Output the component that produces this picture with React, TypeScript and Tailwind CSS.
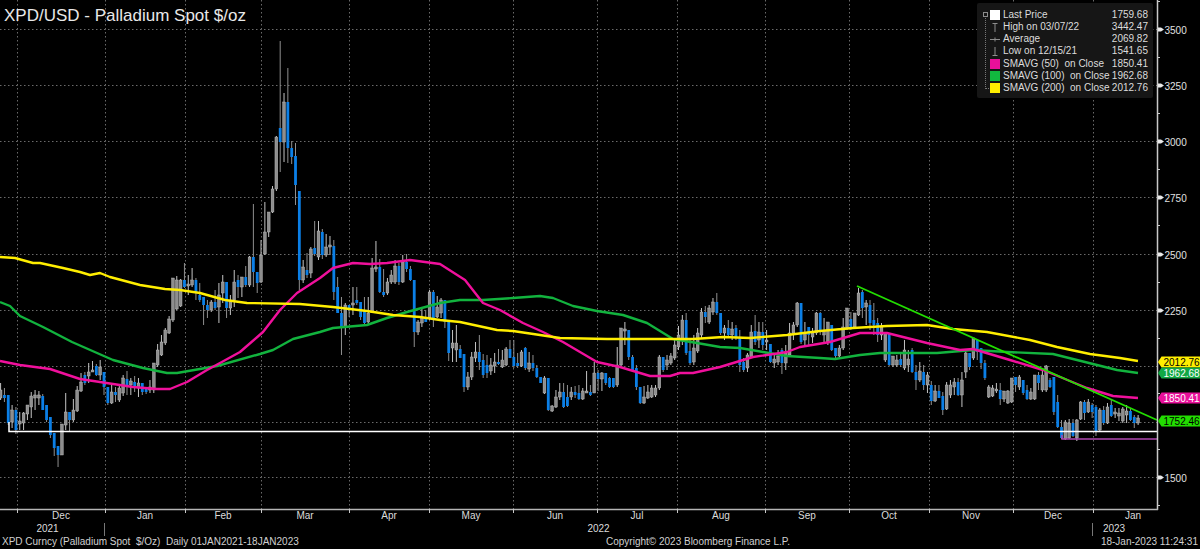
import React from "react";

// [high, bodyTop, bodyBottom, low, up] in page pixels, one row per trading day
const CANDLES: number[][] = [
  [383,390,398,400,1],[388,395,398,402,0],[395,395,423,425,0],[405,410,422,428,1],[407,410,430,434,0],[412,421,424,430,1],[412,413,423,430,1],[405,405,414,420,1],
  [392,396,407,418,1],[390,395,398,410,1],[391,395,398,405,1],[394,396,410,410,0],[405,405,420,422,0],[417,417,435,438,0],[433,433,448,456,0],[446,446,455,467,0],
  [424,424,455,455,1],[393,412,425,430,1],[412,412,420,432,0],[399,410,420,422,1],[386,390,411,412,1],[373,382,391,392,1],[372,375,383,385,0],[363,372,376,383,1],
  [361,370,372,372,1],[364,366,375,376,0],[360,367,375,380,1],[372,372,387,395,0],[387,387,403,405,0],[385,392,403,404,1],[387,392,395,402,0],[385,388,400,402,1],
  [375,378,393,396,1],[371,379,387,395,0],[378,381,385,395,1],[376,382,386,392,0],[378,383,388,397,1],[383,383,392,395,0],[388,388,392,394,0],[380,387,390,393,1],
  [363,363,390,393,1],[344,350,365,367,1],[335,342,355,356,1],[328,330,343,345,1],[316,319,333,334,1],[278,278,320,322,1],[276,280,309,310,1],[279,280,306,307,1],
  [263,280,287,288,0],[275,284,286,295,1],[268,280,285,287,1],[278,280,292,300,0],[283,295,300,302,0],[297,297,305,325,0],[300,305,310,318,0],[300,302,310,312,1],
  [290,302,308,310,0],[283,295,307,323,1],[275,282,293,303,1],[282,282,308,318,0],[295,300,308,315,1],[270,282,300,307,1],[275,280,287,298,0],[277,277,287,297,1],
  [266,277,285,287,0],[256,257,285,287,1],[204,257,272,287,0],[272,272,283,293,0],[240,255,282,283,1],[202,232,254,255,1],[212,212,232,237,1],[186,189,212,213,1],
  [136,137,189,191,1],[41,128,142,172,0],[93,102,142,162,1],[68,102,148,163,0],[141,148,157,164,0],[143,156,185,205,0],[191,191,280,290,0],[260,267,280,283,1],
  [253,270,275,278,0],[247,249,273,278,1],[221,248,254,256,0],[221,231,257,260,1],[229,232,255,259,0],[234,247,255,257,1],[236,245,247,255,1],[240,246,292,300,0],
  [277,287,313,313,0],[297,313,327,355,0],[303,305,327,335,1],[305,305,310,317,0],[287,303,305,315,1],[287,300,303,305,0],[302,302,317,320,0],[297,310,323,325,0],
  [297,313,322,325,1],[258,268,312,313,1],[241,267,269,272,1],[259,267,292,293,0],[269,292,295,297,0],[278,282,293,295,1],[270,275,282,284,1],[260,266,282,284,1],
  [263,266,282,285,0],[255,262,282,283,1],[254,262,269,272,0],[266,269,280,281,0],[280,280,332,347,0],[320,322,332,335,1],[308,318,323,327,1],[310,318,322,322,0],
  [290,292,318,320,1],[290,292,318,327,0],[296,307,317,318,1],[298,300,313,318,1],[300,300,322,328,0],[322,322,353,361,0],[330,343,348,362,1],[325,343,350,362,1],
  [345,349,358,358,0],[354,354,387,392,0],[372,377,387,390,1],[352,357,377,380,1],[342,352,358,362,1],[335,352,362,370,0],[354,360,375,378,0],[355,365,373,378,0],
  [358,365,371,375,1],[353,362,366,373,1],[349,362,364,365,0],[350,360,367,368,1],[347,349,365,366,1],[340,349,358,358,0],[340,357,366,368,0],[353,363,366,368,0],
  [350,352,366,367,1],[347,348,368,370,0],[352,363,369,372,1],[355,363,368,371,0],[365,368,377,378,0],[377,377,383,383,0],[376,378,393,394,1],[378,378,410,411,0],
  [405,406,411,412,1],[390,397,407,408,1],[383,392,397,400,1],[383,392,407,408,0],[385,397,406,407,0],[387,392,397,400,1],[386,392,395,398,0],[385,393,399,400,0],
  [388,391,399,400,1],[371,391,393,393,1],[385,392,395,396,0],[362,373,393,393,1],[370,373,379,391,0],[372,373,379,391,1],[373,373,383,385,0],[377,378,387,388,0],
  [378,378,387,388,0],[347,365,385,387,1],[328,328,365,366,1],[322,329,331,345,1],[330,330,357,360,0],[355,357,370,372,0],[365,368,387,390,0],[387,387,403,404,0],
  [386,397,403,404,1],[385,392,398,399,1],[385,388,397,398,1],[385,388,395,397,1],[355,357,388,390,1],[357,357,370,372,0],[355,360,365,370,1],[353,356,363,365,1],
  [338,345,358,360,1],[326,335,347,350,1],[315,320,340,345,1],[313,320,353,355,0],[338,351,363,365,0],[335,348,362,365,1],[328,333,351,353,1],[308,312,335,338,1],
  [306,312,317,323,0],[305,308,322,324,1],[298,302,312,315,1],[293,302,313,315,0],[313,313,333,335,0],[325,328,333,340,1],[320,328,335,338,0],[322,329,335,340,1],
  [325,328,338,340,0],[330,338,365,372,0],[358,362,370,372,0],[353,355,368,372,1],[325,332,357,358,1],[315,331,342,345,0],[322,332,340,348,1],[322,332,345,350,0],
  [330,340,342,350,1],[344,344,362,363,0],[355,359,363,368,1],[350,356,362,365,1],[348,350,363,374,0],[345,353,363,370,1],[323,333,355,357,1],[322,325,333,340,1],
  [302,303,325,327,1],[303,303,342,344,0],[322,333,340,345,1],[327,327,335,345,0],[328,333,337,343,1],[312,313,333,335,1],[312,313,332,335,0],[318,331,335,342,1],
  [322,322,342,345,1],[325,325,350,351,0],[348,348,356,358,0],[345,348,356,358,1],[318,327,348,350,1],[308,308,328,330,1],[312,319,328,330,0],[313,313,327,329,1],
  [288,293,315,316,1],[290,292,308,318,0],[300,303,307,325,1],[300,305,323,330,0],[303,320,325,335,0],[318,323,335,342,0],[323,327,335,340,1],[333,333,360,362,1],
  [333,333,365,366,0],[356,356,365,367,1],[355,360,365,367,1],[352,359,365,367,0],[340,350,368,370,1],[350,359,365,372,1],[348,350,372,373,0],[365,372,380,390,0],
  [362,371,380,382,1],[365,372,385,390,0],[372,375,385,393,1],[381,385,401,405,0],[385,391,401,402,1],[385,391,398,398,0],[392,396,410,415,0],[382,385,409,410,1],
  [380,385,395,398,1],[378,382,387,395,1],[378,382,395,396,0],[372,380,395,407,1],[350,353,372,378,1],[353,353,367,370,0],[338,338,358,360,1],[340,340,352,360,0],
  [348,348,363,369,0],[360,363,378,380,0],[385,387,397,398,1],[385,388,396,397,1],[383,389,391,393,1],[383,390,399,405,0],[391,391,399,402,1],[390,391,403,404,1],
  [378,378,402,403,1],[377,377,385,392,0],[375,377,387,390,1],[380,380,393,395,0],[385,390,399,400,0],[388,392,399,400,1],[375,375,399,400,1],[372,375,383,390,0],
  [370,375,390,392,1],[365,366,390,392,1],[378,380,387,388,0],[377,377,412,415,0],[395,402,427,428,0],[420,427,438,439,0],[420,422,439,440,1],[419,423,438,439,1],
  [419,423,436,437,0],[419,420,438,441,1],[401,402,419,420,1],[400,402,413,420,0],[399,402,412,413,1],[403,405,412,418,0],[405,407,431,436,0],[408,410,430,431,1],
  [406,410,423,425,0],[403,407,423,424,1],[400,405,416,417,0],[408,412,414,418,1],[408,413,416,421,1],[407,409,421,423,1],[405,411,415,423,1],[408,411,420,421,0],
  [415,417,423,428,0],[415,418,423,425,1],
];

const YELLOW = "0,257 15,258 33,263 40,263 63,268 80,272 90,275 100,273 110,277 140,285 165,289 180,290 200,293 225,300 247,303 300,304 333,307 367,311 393,315 420,317 440,320 460,322 497,330 513,331 540,335 560,338 607,339 653,339 693,339 723,337 750,338 787,335 820,331 853,328 887,326 927,325 953,329 987,332 1030,340 1057,347 1090,354 1120,358 1138,361";
const GREEN = "0,302 10,306 20,316 43,327 72,342 113,360 143,368 167,373 177,373 217,366 260,354 273,350 293,339 320,332 333,328 367,325 387,318 407,312 440,303 460,300 483,300 513,298 540,296 553,298 573,306 597,311 623,315 647,323 673,339 697,343 720,347 740,348 763,352 787,356 820,358 835,359 860,355 880,353 937,353 973,350 1007,352 1053,354 1093,364 1117,370 1138,373";
const MAGENTA = "0,361 20,365 50,369 80,379 100,382 133,387 157,389 170,389 187,382 207,370 220,363 240,352 263,332 280,310 297,293 320,278 333,268 353,263 370,264 387,263 410,260 440,264 465,280 483,303 500,310 523,323 543,332 563,342 597,362 620,367 650,376 670,376 680,373 693,373 720,367 753,357 787,352 800,347 830,342 860,333 887,333 927,343 960,350 973,349 1010,360 1043,370 1087,388 1113,396 1138,398";

const GRID_Y = [29, 85, 141, 197, 254, 310, 366, 422, 477];
const GRID_X = [17, 105, 185, 261, 349, 429, 513, 597, 677, 765, 849, 929, 1013, 1093];
const Y_LABELS: [number, string][] = [[29, "3500"], [85, "3250"], [141, "3000"], [197, "2750"], [254, "2500"], [310, "2250"], [477, "1500"]];
const MINOR_Y = [1, 57, 113, 169, 225, 282, 338, 393, 449, 505];

const TAGS = [
  { y: 362, label: "2012.76", bg: "#ffee00", fg: "#000000" },
  { y: 373, label: "1962.68", bg: "#12a845", fg: "#ffffff" },
  { y: 398, label: "1850.41", bg: "#e8109a", fg: "#ffffff" },
  { y: 421, label: "1752.46", bg: "#22dd00", fg: "#000000" },
];

const MONTHS = ["Dec", "Jan", "Feb", "Mar", "Apr", "May", "Jun", "Jul", "Aug", "Sep", "Oct", "Nov", "Dec", "Jan"];

const LEGEND = [
  { icon: "box", color: "bg-white", label: "Last Price", value: "1759.68" },
  { icon: "high", label: "High on 03/07/22", value: "3442.47" },
  { icon: "avg", label: "Average", value: "2069.82" },
  { icon: "low", label: "Low on 12/15/21", value: "1541.65" },
  { icon: "box", color: "bg-[#e8109a]", label: "SMAVG (50)  on Close", value: "1850.41" },
  { icon: "box", color: "bg-[#12b83f]", label: "SMAVG (100)  on Close", value: "1962.68" },
  { icon: "box", color: "bg-[#ffee00]", label: "SMAVG (200)  on Close", value: "2012.76" },
];

const LegendIcon = ({ icon, color }: { icon: string; color?: string }) => {
  if (icon === "box") return <span className={`block h-[10px] w-[10px] ${color}`} />;
  return (
    <svg width="10" height="11" viewBox="0 0 10 11" fill="none" stroke="#8c8c8c" strokeWidth="1">
      {icon === "high" && <path d="M2.5 1.5H7.5M5 1.5V10" />}
      {icon === "avg" && <path d="M0 5.5H10M5 3.5V7.5" />}
      {icon === "low" && <path d="M2.5 9.5H7.5M5 1V9.5" />}
    </svg>
  );
};

const Chart = () => (
  <svg width="1200" height="510" className="block shrink-0 overflow-visible [font-family:'Liberation_Sans',sans-serif]">
    {GRID_Y.map((y) => (
      <line key={y} x1="0" x2="1157" y1={y + 0.5} y2={y + 0.5} stroke="#6a6a6a" strokeDasharray="1.5 2.5" />
    ))}
    {GRID_X.map((x) => (
      <line key={x} x1={x + 0.5} x2={x + 0.5} y1="0" y2="509" stroke="#6a6a6a" strokeDasharray="1.5 2.5" />
    ))}

    {CANDLES.map(([h, t, b, l, up], i) => {
      const x = 0.6 + i * 3.83;
      return (
        <g key={i}>
          <line x1={x} x2={x} y1={h} y2={l} stroke={up ? "#c4c4c4" : "#8f8f8f"} strokeWidth="1" />
          <rect x={x - 1.4} y={t} width="2.8" height={Math.max(b - t, 1.2)} fill={up ? "#8e8e8e" : "#0b7fe6"} stroke={up ? "#c8c8c8" : "none"} strokeWidth={up ? 0.4 : 0} />
        </g>
      );
    })}

    <polyline points={GREEN} fill="none" stroke="#12b33e" strokeWidth="2.4" strokeLinejoin="round" />
    <polyline points={MAGENTA} fill="none" stroke="#f0109c" strokeWidth="2.4" strokeLinejoin="round" />
    <polyline points={YELLOW} fill="none" stroke="#ffee00" strokeWidth="2.4" strokeLinejoin="round" />
    <line x1="857" y1="286" x2="1157" y2="420" stroke="#22dd00" strokeWidth="1.8" />

    <path d="M9 422V431.5H1157" fill="none" stroke="#ffffff" strokeWidth="1.5" />
    <path d="M1062 435V439H1157" fill="none" stroke="#b048b0" strokeWidth="1.5" />

    <line x1="1157.5" x2="1157.5" y1="0" y2="510" stroke="#c8c8c8" strokeWidth="1.5" />
    <line x1="0" x2="1158" y1="509.5" y2="509.5" stroke="#b4b4b4" strokeWidth="1.5" />
    {GRID_X.map((x) => (
      <line key={x} x1={x + 0.5} x2={x + 0.5} y1="509" y2="513" stroke="#c8c8c8" />
    ))}
    {MINOR_Y.map((y) => (
      <line key={y} x1="1157" x2="1160" y1={y + 0.5} y2={y + 0.5} stroke="#c8c8c8" />
    ))}
    {Y_LABELS.map(([y, label]) => (
      <g key={label}>
        <path d={`M1158 ${y - 1.5}H1161L1164 ${y + 0.5}L1161 ${y + 2.5}H1158Z`} fill="#e8e8e8" />
        <text x="1164.5" y={y + 4.5} fontSize="10" fill="#e0e0e0">{label}</text>
      </g>
    ))}
    {TAGS.map((tag) => (
      <g key={tag.label}>
        <polygon points={`1158,${tag.y} 1161.5,${tag.y - 5.5} 1200,${tag.y - 5.5} 1200,${tag.y + 5.5} 1161.5,${tag.y + 5.5}`} fill={tag.bg} />
        <text x="1163.5" y={tag.y + 4} fontSize="10" fill={tag.fg}>{tag.label}</text>
      </g>
    ))}
  </svg>
);

export default function App() {
  return (
    <div className="relative flex h-[549px] w-[1200px] flex-col overflow-hidden bg-black text-[10px] leading-[12.5px] text-[#dcdcdc] [font-family:'Liberation_Sans',sans-serif]">
      <Chart />

      <h1 className="absolute left-[4px] top-[6px] text-[17px] leading-[20px] text-[#e8e8e8]">XPD/USD - Palladium Spot $/oz</h1>

      <div className="absolute left-[977px] top-[3px] h-[95px] w-[176px] rounded-[2px] bg-[#161616] pt-[6px]">
        <span className="absolute left-[6px] top-[9px] h-[5px] w-[5px] border border-[#8c8c8c]" />
        <span className="absolute left-[8px] top-[15px] h-[71px] w-[4px] border-b border-l border-dotted border-[#777]" />
        {LEGEND.map((row) => (
          <div key={row.label} className="flex h-[12.2px] items-center pl-[13px] pr-[5px]">
            <span className="flex w-[13px] shrink-0 items-center">
              <LegendIcon icon={row.icon} color={row.color} />
            </span>
            <span className="flex-1 whitespace-pre text-[#dcdcdc]">{row.label}</span>
            <span>{row.value}</span>
          </div>
        ))}
      </div>

      <div className="grid h-[13px] shrink-0 grid-cols-[88px_80px_76px_88px_80px_84px_84px_80px_88px_84px_80px_84px_80px_64px] pl-[17px]">
        {MONTHS.map((m, i) => (
          <span key={i} className={`text-center ${i === 13 ? "pl-[16px]" : ""}`}>{m}</span>
        ))}
      </div>
      <div className="grid h-[13px] shrink-0 grid-cols-[105px_988px_42px]">
        <span className="border-r border-[#777] pr-[9px] text-center">2021</span>
        <span className="border-r border-[#777] text-center">2022</span>
        <span className="text-center">2023</span>
      </div>
      <div className="flex h-[13px] shrink-0 text-[#d0d0d0]">
        <span className="w-[606px] whitespace-pre pl-[2px]">XPD Curncy (Palladium Spot  $/Oz)  Daily 01JAN2021-18JAN2023</span>
        <span>Copyright© 2023 Bloomberg Finance L.P.</span>
        <span className="ml-auto pr-[2px]">18-Jan-2023 11:24:31</span>
      </div>
    </div>
  );
}
